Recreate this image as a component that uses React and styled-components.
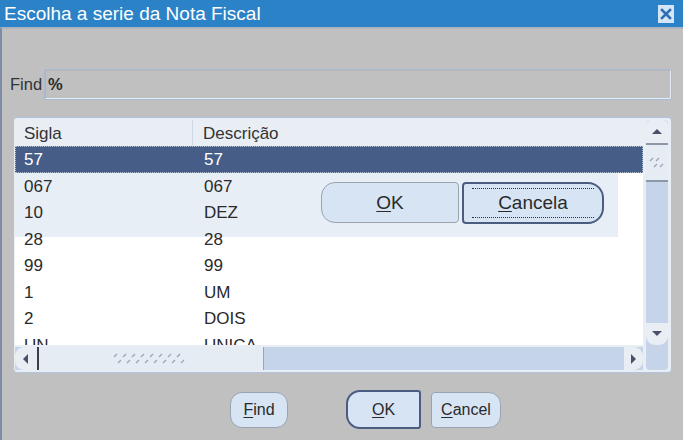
import React from 'react';
import styled, { createGlobalStyle } from 'styled-components';

const GlobalStyle = createGlobalStyle`
  html, body {
    margin: 0;
    padding: 0;
    background: #c0c0c0;
  }
  body {
    font-family: "Liberation Sans", Arial, sans-serif;
    color: #2a2a2a;
  }
`;

const Window = styled.div`
  width: 683px;
  height: 440px;
  display: flex;
  flex-direction: column;
  overflow: hidden;
  background: #c0c0c0;
`;

const TitleBar = styled.div`
  height: 27px;
  flex: none;
  box-sizing: border-box;
  background: #2b82c6;
  display: flex;
  align-items: center;
  justify-content: space-between;
  padding: 0 9px 0 4px;
`;

const Title = styled.span`
  color: #fff;
  font-size: 19px;
`;

const CloseBox = styled.div`
  width: 16px;
  height: 18px;
  background: #d3e5f6;
  display: flex;
  align-items: center;
  justify-content: center;
`;

const Body = styled.div`
  flex: 1;
  display: flex;
  flex-direction: column;
  border-top: 2px solid #aab3bf;
  border-left: 2px solid #7d8da5;
  padding: 40px 11px 0 8px;
`;

const FindRow = styled.div`
  display: flex;
  align-items: center;
  gap: 2px;
  height: 31px;
`;

const Label = styled.span`
  font-size: 16.5px;
  color: #333;
`;

const FindInput = styled.div`
  flex: 1;
  height: 31px;
  box-sizing: border-box;
  border: 1px solid #a9bad5;
  border-radius: 2px;
  box-shadow: inset -1px -1px 0 #e6ecf5, inset 1px 1px 0 #b4b4b4;
  display: flex;
  align-items: center;
  padding-left: 3px;
  font-size: 16.5px;
  font-weight: bold;
  color: #2a2a2a;
`;

const Panel = styled.div`
  margin: 17px 0 0 3px;
  height: 256px;
  box-sizing: border-box;
  border: 1px solid #b2c3dd;
  border-radius: 4px;
  background: #e9eef5;
  padding: 2px 3px 2px 1px;
  display: grid;
  grid-template-columns: 628px 25px;
  grid-template-rows: 225px 2px 23px;
`;

const Content = styled.div`
  position: relative;
  background: #fff;
  overflow: hidden;
`;

const HeaderRow = styled.div`
  position: relative;
  display: grid;
  grid-template-columns: 178px 1fr;
  height: 26px;
  background: #e9eef5;
  font-size: 17px;
  color: #333;
`;

const HeaderCell = styled.div`
  display: flex;
  align-items: center;
  padding: 1px 0 0 ${p => p.$pad}px;
  border-right: ${p => (p.$divider ? '1px solid #cfd9e8' : 'none')};
`;

const Row = styled.div`
  position: relative;
  display: grid;
  grid-template-columns: 178px 1fr;
  height: 26.5px;
  box-sizing: border-box;
  padding-top: 2px;
  font-size: 17px;
  color: ${p => (p.$selected ? '#fff' : '#2a2a2a')};
  background: ${p => (p.$selected ? '#465e87' : 'transparent')};
  outline: ${p => (p.$selected ? '1px dotted #b3bfd3' : 'none')};
  outline-offset: -1px;
`;

const Cell = styled.div`
  display: flex;
  align-items: center;
  padding-left: ${p => p.$pad}px;
  white-space: nowrap;
`;

const OverlayBack = styled.div`
  position: absolute;
  left: 0;
  top: 52px;
  width: 603px;
  height: 65px;
  background: #e8eef6;
`;

const OverlayButtons = styled.div`
  position: absolute;
  left: 306px;
  top: 62px;
  display: flex;
  align-items: flex-start;
  gap: 3px;
`;

const Button = styled.div`
  width: ${p => p.$w}px;
  height: ${p => p.$h}px;
  box-sizing: border-box;
  background: #d6e4f4;
  border: ${p => (p.$focus ? '2px solid #4a5d80' : '1px solid #9aa3b2')};
  border-radius: ${p => `${p.$l}px ${p.$r}px ${p.$r}px ${p.$l}px`};
  display: flex;
  align-items: center;
  justify-content: center;
  font-size: ${p => p.$fs}px;
  color: #2a2a2a;
  position: relative;

  u {
    text-underline-offset: 2px;
  }
`;

const FocusRing = styled.span`
  position: absolute;
  inset: 4px 8px 4px 8px;
  border-top: 1px dotted #333;
  border-bottom: 1px dotted #333;
  pointer-events: none;
`;

const VScroll = styled.div`
  grid-row: 1 / 4;
  grid-column: 2;
  margin-left: 3px;
  background: #c5d4e8;
  border-radius: 4px;
  display: flex;
  flex-direction: column;
`;

const ArrowBtn = styled.div`
  flex: none;
  width: ${p => p.$w}px;
  height: ${p => p.$h}px;
  background: #e9eef5;
  border-radius: ${p => p.$radius};
  display: flex;
  align-items: center;
  justify-content: center;
`;

const VThumb = styled.div`
  height: 35px;
  background: #e6ecf4;
  border-top: 2px solid #8c97a8;
  border-bottom: 2px solid #8c97a8;
  display: flex;
  align-items: center;
  justify-content: center;
`;

const Spacer = styled.div`
  flex: 1;
`;

const HScroll = styled.div`
  grid-row: 3;
  grid-column: 1;
  background: #c5d4e8;
  display: flex;
  align-items: stretch;
`;

const HThumb = styled.div`
  width: 227px;
  background: #e6ecf4;
  border-left: 2px solid #3b3f4c;
  border-right: 1px solid #9aa6b8;
  box-sizing: border-box;
  display: flex;
  align-items: center;
  justify-content: center;
`;

const Footer = styled.div`
  margin-top: 17px;
  padding-left: 220px;
  display: flex;
  align-items: center;
  height: 39px;
`;

const Triangle = ({ dir }) => {
  const pts = {
    up: '1,8 6,3 11,8',
    down: '1,3 11,3 6,8',
    left: '8,1 8,11 3,6',
    right: '3,1 3,11 8,6',
  }[dir];
  return (
    <svg width="12" height="12" viewBox="0 0 12 12">
      <polygon points={pts} fill="#4b5068" />
    </svg>
  );
};

const Grip = ({ count, rows, step = 9 }) => {
  const marks = [];
  for (let r = 0; r < rows; r++) {
    for (let i = 0; i < count; i++) {
      const x = i * step + (r % 2) * 4;
      const y = r * 6;
      marks.push(<line key={`${r}-${i}`} x1={x + 1} y1={y + 5} x2={x + 4} y2={y + 2} stroke="#9aa4b4" strokeWidth="1.2" />);
    }
  }
  return (
    <svg width={count * step + 4} height={rows * 6 + 2}>
      {marks}
    </svg>
  );
};

const rows = [
  ['57', '57'],
  ['067', '067'],
  ['10', 'DEZ'],
  ['28', '28'],
  ['99', '99'],
  ['1', 'UM'],
  ['2', 'DOIS'],
  ['UN', 'UNICA'],
];

export default function App() {
  return (
    <>
      <GlobalStyle />
      <Window>
        <TitleBar>
          <Title>Escolha a serie da Nota Fiscal</Title>
          <CloseBox>
            <svg width="12" height="12" viewBox="0 0 12 12">
              <path d="M2 2 L10 10 M10 2 L2 10" stroke="#2c6fb3" strokeWidth="2.6" strokeLinecap="square" />
            </svg>
          </CloseBox>
        </TitleBar>
        <Body>
          <FindRow>
            <Label>Find</Label>
            <FindInput>%</FindInput>
          </FindRow>
          <Panel>
            <Content>
              <OverlayBack />
              <HeaderRow>
                <HeaderCell $pad={9} $divider>Sigla</HeaderCell>
                <HeaderCell $pad={10}>Descrição</HeaderCell>
              </HeaderRow>
              {rows.map(([sigla, desc], i) => (
                <Row key={sigla} $selected={i === 0}>
                  <Cell $pad={9}>{sigla}</Cell>
                  <Cell $pad={11}>{desc}</Cell>
                </Row>
              ))}
              <OverlayButtons>
                <Button $w={138} $h={41} $l={14} $r={4} $fs={19}>
                  <span><u>O</u>K</span>
                </Button>
                <Button $w={142} $h={42} $l={4} $r={16} $fs={19} $focus>
                  <FocusRing />
                  <span><u>C</u>ancela</span>
                </Button>
              </OverlayButtons>
            </Content>
            <VScroll>
              <ArrowBtn $w={22} $h={23} $radius="5px 5px 0 0">
                <Triangle dir="up" />
              </ArrowBtn>
              <VThumb>
                <Grip count={2} rows={2} step={6} />
              </VThumb>
              <Spacer />
              <ArrowBtn $w={22} $h={22} $radius="0 0 9px 9px" style={{ marginBottom: 25 }}>
                <Triangle dir="down" />
              </ArrowBtn>
            </VScroll>
            <HScroll>
              <ArrowBtn $w={22} $h={23} $radius="9px 0 0 9px">
                <Triangle dir="left" />
              </ArrowBtn>
              <HThumb>
                <Grip count={8} rows={2} />
              </HThumb>
              <Spacer />
              <ArrowBtn $w={19} $h={23} $radius="0 9px 9px 0">
                <Triangle dir="right" />
              </ArrowBtn>
            </HScroll>
          </Panel>
          <Footer>
            <Button $w={58} $h={36} $l={12} $r={12} $fs={16}>
              <span><u>F</u>ind</span>
            </Button>
            <Button $w={75} $h={39} $l={14} $r={3} $fs={16} $focus style={{ marginLeft: 58 }}>
              <span><u>O</u>K</span>
            </Button>
            <Button $w={70} $h={36} $l={4} $r={12} $fs={16} style={{ marginLeft: 10 }}>
              <span><u>C</u>ancel</span>
            </Button>
          </Footer>
        </Body>
      </Window>
    </>
  );
}
